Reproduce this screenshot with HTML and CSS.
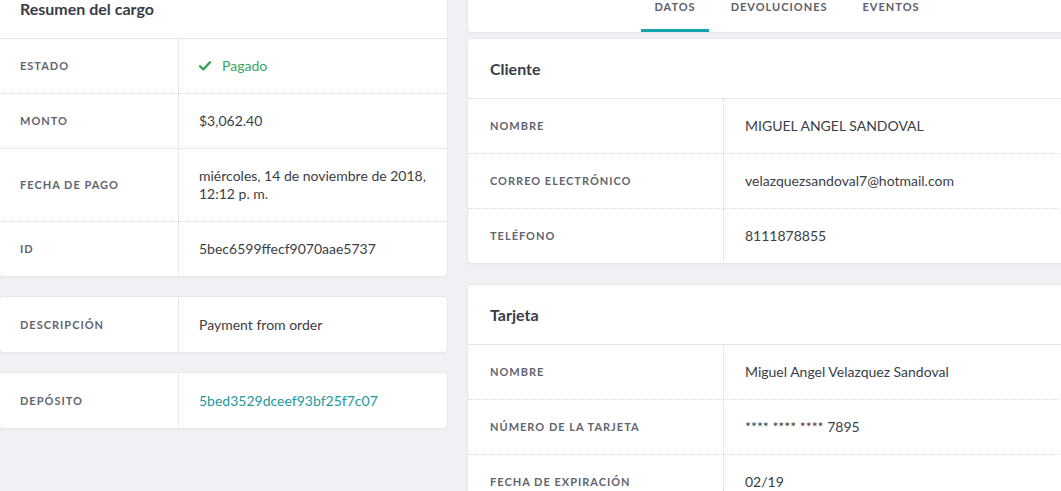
FILE: index.html
```html
<!DOCTYPE html>
<html lang="es">
<head>
<meta charset="utf-8">
<title>Resumen del cargo</title>
<link rel="stylesheet" href="styles.css">
</head>
<body>
<div class="page">
  <div class="col col-left">
    <section class="card">
      <header class="card-head">Resumen del cargo</header>
      <div class="rows rows-left">
        <div class="row">
          <div class="label">Estado</div>
          <div class="value status">
            <svg class="check" width="12" height="10" viewBox="0 0 12 10"><path d="M1 5.2 L4.3 8.4 L11 1.2" fill="none" stroke="#2f9e55" stroke-width="2.2" stroke-linecap="round" stroke-linejoin="round"/></svg>
            <span>Pagado</span>
          </div>
        </div>
        <div class="row">
          <div class="label">Monto</div>
          <div class="value">$3,062.40</div>
        </div>
        <div class="row">
          <div class="label">Fecha de pago</div>
          <div class="value">miércoles, 14 de noviembre de 2018,<br>12:12 p. m.</div>
        </div>
        <div class="row">
          <div class="label">ID</div>
          <div class="value">5bec6599ffecf9070aae5737</div>
        </div>
      </div>
    </section>
    <section class="card">
      <div class="rows rows-left">
        <div class="row single">
          <div class="label">Descripción</div>
          <div class="value">Payment from order</div>
        </div>
      </div>
    </section>
    <section class="card">
      <div class="rows rows-left">
        <div class="row single">
          <div class="label">Depósito</div>
          <div class="value"><a class="link" href="#">5bed3529dceef93bf25f7c07</a></div>
        </div>
      </div>
    </section>
  </div>
  <div class="col col-right">
    <nav class="card tabs">
      <a class="tab active" href="#">Datos</a>
      <a class="tab" href="#">Devoluciones</a>
      <a class="tab" href="#">Eventos</a>
    </nav>
    <section class="card card-tight">
      <header class="card-head">Cliente</header>
      <div class="rows rows-right">
        <div class="row">
          <div class="label">Nombre</div>
          <div class="value">MIGUEL ANGEL SANDOVAL</div>
        </div>
        <div class="row">
          <div class="label">Correo electrónico</div>
          <div class="value">velazquezsandoval7@hotmail.com</div>
        </div>
        <div class="row">
          <div class="label">Teléfono</div>
          <div class="value">8111878855</div>
        </div>
      </div>
    </section>
    <section class="card">
      <header class="card-head">Tarjeta</header>
      <div class="rows rows-right">
        <div class="row">
          <div class="label">Nombre</div>
          <div class="value">Miguel Angel Velazquez Sandoval</div>
        </div>
        <div class="row">
          <div class="label">Número de la tarjeta</div>
          <div class="value">**** **** **** 7895</div>
        </div>
        <div class="row">
          <div class="label">Fecha de expiración</div>
          <div class="value">02/19</div>
        </div>
      </div>
    </section>
  </div>
</div>
</body>
</html>
```

FILE: styles.css
```css
html, body {
  margin: 0;
  padding: 0;
  background: #eff1f4;
  overflow: hidden;
}
body {
  font-family: Lato, "Open Sans", sans-serif;
  color: #3b3e46;
  height: 491px;
}
.page {
  display: grid;
  grid-template-columns: 447px 638px;
  column-gap: 21px;
  width: 1106px;
  margin-top: -21px;
  align-items: start;
}
.col {
  display: flex;
  flex-direction: column;
  gap: 21px;
}
.col-right {
  gap: 7px;
}
.card-tight {
  margin-bottom: 15px;
}
.card {
  background: #fff;
  border-radius: 4px;
  box-shadow: 0 0 0 1px #e7e9ed, 0 1px 2px rgba(40, 45, 60, 0.10);
}
.card-head {
  height: 59px;
  display: flex;
  align-items: center;
  padding: 0 21px 0 20px;
  font-size: 16px;
  font-weight: 700;
  color: #383c47;
  border-bottom: 1px solid #e2e5e9;
}
.col-right .card-head {
  padding-left: 22px;
}
.row {
  display: grid;
  border-top: 1px dotted #d6d9de;
}
.row:first-child {
  border-top: 0;
}
.rows-left .row {
  grid-template-columns: 178px 1fr;
}
.rows-right .row {
  grid-template-columns: 255px 1fr;
}
.label {
  display: flex;
  align-items: center;
  padding: 18px 20px;
  font-size: 11px;
  font-weight: 700;
  letter-spacing: 1px;
  text-transform: uppercase;
  color: #61656f;
  line-height: 18px;
}
.rows-right .label {
  padding-left: 22px;
}
.value {
  display: flex;
  align-items: center;
  padding: 18px 20px 18px 20px;
  border-left: 1px dotted #d6d9de;
  font-size: 14px;
  line-height: 18px;
  color: #3b3e46;
}
.rows-right .value {
  padding-left: 21px;
}
.row.single .label,
.row.single .value {
  padding-top: 19px;
}
.status {
  color: #3aa55f;
  gap: 11px;
}
.check {
  display: block;
}
.link {
  color: #24999d;
  text-decoration: none;
}
.tabs {
  display: flex;
  justify-content: center;
  gap: 9px;
  height: 53px;
  align-items: flex-end;
  border-radius: 0 0 4px 4px;
}
.tab {
  display: block;
  padding: 20px 13px 15px;
  line-height: 15px;
  font-size: 11px;
  font-weight: 700;
  letter-spacing: 1px;
  text-transform: uppercase;
  color: #5b606b;
  text-decoration: none;
  border-bottom: 3px solid transparent;
}
.tab.active {
  border-bottom-color: #12a3ad;
}
```
